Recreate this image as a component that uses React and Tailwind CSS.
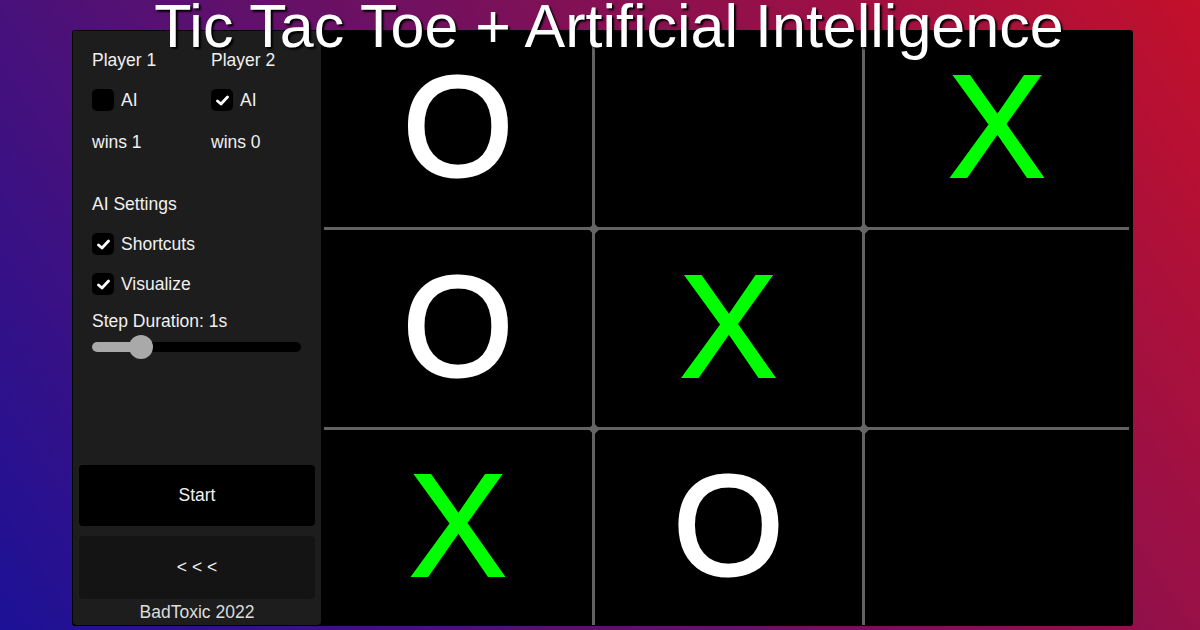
import React from "react";

const font = { fontFamily: '"Liberation Sans", Arial, sans-serif' };

const board = [
  ["O", "", "X"],
  ["O", "X", ""],
  ["X", "O", ""],
];

function Check({ checked }) {
  return (
    <div className="flex h-[22px] w-[22px] items-center justify-center rounded-[5px] bg-black">
      {checked && (
        <svg width="13" height="11" viewBox="0 0 13 11">
          <path d="M1.5 6 L5 9 L11.5 2" fill="none" stroke="white" strokeWidth="2.8" strokeLinecap="round" strokeLinejoin="round" />
        </svg>
      )}
    </div>
  );
}

function CheckRow({ checked, label }) {
  return (
    <div className="flex h-[22px] items-center gap-[7px]">
      <Check checked={checked} />
      <span>{label}</span>
    </div>
  );
}

function Sidebar() {
  return (
    <div className="flex w-[248px] flex-col rounded-b-[4px] bg-[#1d1d1d] text-[17.5px] text-[#f0f0f0]">
      <div className="px-[19px] pt-[19px]">
        <div className="flex h-[20px] items-center">
          <span className="w-[119px]">Player 1</span>
          <span>Player 2</span>
        </div>
        <div className="mt-[19px] flex">
          <div className="w-[119px]">
            <CheckRow checked={false} label="AI" />
          </div>
          <CheckRow checked={true} label="AI" />
        </div>
        <div className="mt-[21px] flex h-[20px] items-center">
          <span className="w-[119px]">wins 1</span>
          <span>wins 0</span>
        </div>
        <div className="mt-[42px] flex h-[20px] items-center">AI Settings</div>
        <div className="mt-[19px]">
          <CheckRow checked={true} label="Shortcuts" />
        </div>
        <div className="mt-[18px]">
          <CheckRow checked={true} label="Visualize" />
        </div>
        <div className="mt-[16px] flex h-[20px] items-center">Step Duration: 1s</div>
        <div className="relative mt-[4px] flex h-[24px] w-[209px] items-center">
          <div className="h-[10px] w-full rounded-full bg-black" />
          <div className="absolute left-0 top-[7px] h-[10px] w-[49px] rounded-l-full bg-[#a9a9a9]" />
          <div className="absolute left-[37px] top-0 h-[24px] w-[24px] rounded-full bg-[#a9a9a9]" />
        </div>
      </div>
      <div className="flex-1" />
      <div className="px-[6px]">
        <div className="flex h-[61px] items-center justify-center rounded-[4px] bg-black">Start</div>
        <div className="mt-[10px] flex h-[63px] items-center justify-center rounded-[4px] bg-[#141414]">&lt; &lt; &lt;</div>
      </div>
      <div className="flex h-[26px] items-center justify-center text-[#dcdcdc]">BadToxic 2022</div>
    </div>
  );
}

function Board() {
  return (
    <div className="relative flex-1 bg-black px-[3px]">
      <div className="grid h-full grid-cols-[268px_267px_1fr] grid-rows-[196px_197px_1fr] gap-[3px] bg-[#626262]">
        {board.flat().map((v, i) => (
          <div
            key={i}
            className={`flex items-center justify-center bg-black pb-[4px] leading-none ${v === "X" ? "text-[146px] text-[#00ff00] [-webkit-text-stroke:2px_#00ff00]" : "text-[142px] text-white [-webkit-text-stroke:3px_#ffffff]"}`}
          >
            {v}
          </div>
        ))}
      </div>
      {[
        [269.5, 197.5],
        [539.5, 197.5],
        [269.5, 397.5],
        [539.5, 397.5],
      ].map(([x, y], i) => (
        <div
          key={i}
          className="absolute h-[8px] w-[8px] rotate-45 bg-[#666666]"
          style={{ left: x - 4 + 3, top: y - 4 }}
        />
      ))}
    </div>
  );
}

export default function App() {
  return (
    <div
      className="relative h-[630px] w-[1200px] overflow-hidden bg-[linear-gradient(56deg,#1c1197,#c3102b)] pl-[72px] pt-[30px]"
      style={font}
    >
      <div className="flex h-[596px] w-[1061px] rounded-[3px] bg-black p-[1px]">
        <Sidebar />
        <Board />
      </div>
      <div className="absolute -top-[4px] left-[18px] right-0 text-center text-[61px] leading-none text-white [text-shadow:2px_2px_2px_#000]">
        Tic Tac Toe + Artificial Intelligence
      </div>
    </div>
  );
}
